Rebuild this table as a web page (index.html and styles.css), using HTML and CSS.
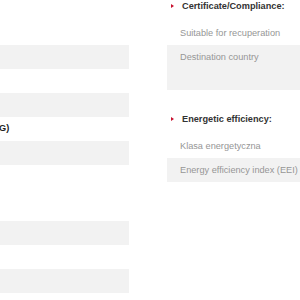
FILE: index.html
```html
<!DOCTYPE html>
<html>
<head>
<meta charset="utf-8">
<link rel="stylesheet" href="styles.css">
</head>
<body>
<div class="page">
  <div class="col col-left">
    <div class="spacer-top"></div>
    <div class="row alt"></div>
    <div class="row"></div>
    <div class="row alt"></div>
    <div class="group-title">G)</div>
    <div class="row alt"></div>
    <div class="row tall"></div>
    <div class="row alt"></div>
    <div class="row"></div>
    <div class="row alt"></div>
  </div>
  <div class="col col-right">
    <div class="section-title"><span class="bullet"></span>Certificate/Compliance:</div>
    <div class="row">Suitable for recuperation</div>
    <div class="row alt big">Destination country</div>
    <div class="section-title second"><span class="bullet"></span>Energetic efficiency:</div>
    <div class="row">Klasa energetyczna</div>
    <div class="row alt">Energy efficiency index (EEI)</div>
  </div>
</div>
</body>
</html>
```
FILE: styles.css
```css
html, body {
  margin: 0;
  padding: 0;
  background: #fff;
  overflow: hidden;
}
body {
  font-family: "Liberation Sans", Arial, sans-serif;
  font-size: 9.2px;
}
.page {
  display: flex;
  gap: 38px;
  width: 300px;
}
.col-left {
  width: 129px;
  flex: none;
}
.col-right {
  flex: 1;
  min-width: 0;
}
.spacer-top {
  height: 45px;
}
.row {
  height: 24px;
  line-height: 24px;
  padding-left: 13px;
  color: #969696;
  white-space: nowrap;
  overflow: hidden;
}
.row.alt {
  background: #f2f2f2;
}
.row.tall {
  height: 56px;
}
.row.big {
  height: 45px;
}
.group-title {
  height: 24px;
  line-height: 22px;
  font-weight: bold;
  color: #222;
  margin-left: -1px;
}
.section-title {
  height: 21px;
  line-height: 12px;
  font-weight: bold;
  color: #333;
  display: flex;
  align-items: flex-start;
  padding-left: 4px;
  white-space: nowrap;
}
.section-title.second {
  margin-top: 23px;
}
.bullet {
  width: 0;
  height: 0;
  border-left: 3px solid #c8102e;
  border-top: 2px solid transparent;
  border-bottom: 2px solid transparent;
  margin-top: 4px;
  margin-right: 8px;
}
```
